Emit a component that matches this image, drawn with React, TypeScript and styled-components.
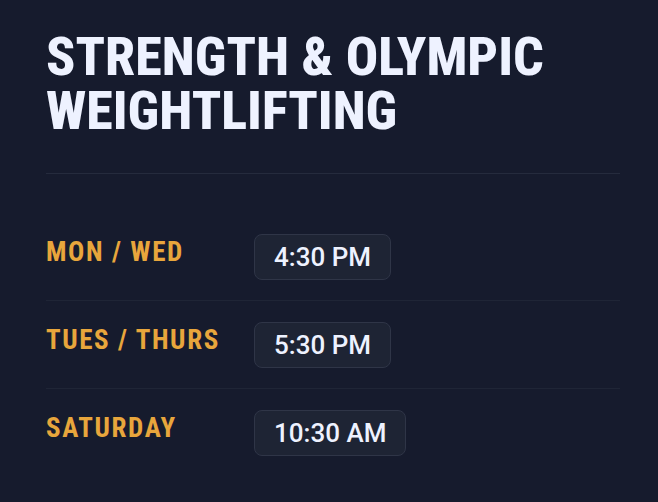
import styled, { createGlobalStyle } from "styled-components"

const GlobalStyle = createGlobalStyle`
  html, body {
    margin: 0;
    padding: 0;
    background: #161b2d;
  }
`

const Container = styled.div`
  width: 658px;
  min-height: 502px;
  box-sizing: border-box;
  padding: 30px 38px 0 46px;
  background: #161b2d;
  font-family: "Roboto", "Liberation Sans", sans-serif;
`

const Title = styled.h1`
  margin: 0;
  font-family: "Roboto Condensed", "Roboto", "Liberation Sans", sans-serif;
  font-stretch: condensed;
  font-weight: 800;
  font-size: 54px;
  line-height: 54px;
  color: #eef2ff;
  text-transform: uppercase;
`

const Divider = styled.div`
  height: 1px;
  background: #252b3d;
  margin: 35px 0 39px;
`

const Schedule = styled.ul`
  list-style: none;
  margin: 0;
  padding: 0;
`

const Row = styled.li<{ $last?: boolean }>`
  display: flex;
  align-items: flex-start;
  padding: 21px 0 20px;
  border-bottom: 1px solid ${(p) => (p.$last ? "transparent" : "#1f2536")};
`

const Day = styled.span`
  width: 208px;
  padding-top: 3px;
  font-family: "Roboto Condensed", "Roboto", "Liberation Sans", sans-serif;
  font-stretch: condensed;
  font-weight: 700;
  font-size: 27px;
  line-height: 30px;
  letter-spacing: 1.6px;
  color: #e8a63c;
  text-transform: uppercase;
`

const Time = styled.span`
  box-sizing: border-box;
  height: 46px;
  padding: 0 19px;
  display: inline-flex;
  align-items: center;
  background: #1e2434;
  border: 1px solid #2f3547;
  border-radius: 8px;
  font-size: 26px;
  font-weight: 500;
  color: #eef2ff;
`

const sessions = [
  { day: "Mon / Wed", time: "4:30 PM" },
  { day: "Tues / Thurs", time: "5:30 PM" },
  { day: "Saturday", time: "10:30 AM" },
]

export default function App() {
  return (
    <Container>
      <GlobalStyle />
      <Title>
        Strength &amp; Olympic
        <br />
        Weightlifting
      </Title>
      <Divider />
      <Schedule>
        {sessions.map((s, i) => (
          <Row key={s.day} $last={i === sessions.length - 1}>
            <Day>{s.day}</Day>
            <Time>{s.time}</Time>
          </Row>
        ))}
      </Schedule>
    </Container>
  )
}
